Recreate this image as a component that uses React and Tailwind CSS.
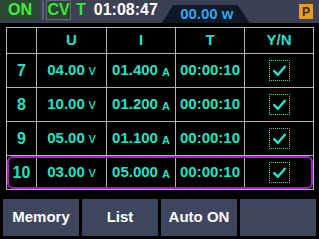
import React from "react";

const rows = [
  { n: "7", u: "04.00", i: "01.400", t: "00:00:10" },
  { n: "8", u: "10.00", i: "01.200", t: "00:00:10" },
  { n: "9", u: "05.00", i: "01.100", t: "00:00:10" },
  { n: "10", u: "03.00", i: "05.000", t: "00:00:10" },
];

function Check() {
  return (
    <div className="w-[21px] h-[21px] border border-dotted border-[#24e2c6] flex items-center justify-center">
      <svg width="17" height="17" viewBox="0 0 16 16">
        <path d="M3 8.5 L6.5 12 L13 4.5" fill="none" stroke="#24e2c6" strokeWidth="2.4" strokeLinecap="round" strokeLinejoin="round" />
      </svg>
    </div>
  );
}

export default function App() {
  const cell = "bg-black flex items-center justify-center text-[#24e2c6] font-bold";
  return (
    <div
      className="w-[319px] h-[239px] bg-black overflow-hidden flex flex-col"
      style={{ fontFamily: '"Liberation Sans", Arial, sans-serif' }}
    >
      {/* status bar */}
      <div className="h-[23px] bg-[#3b4152] flex items-stretch shrink-0">
        <div className="w-[40px] h-[20px] bg-[#2a4a33] flex items-center justify-center text-[#3cf03c] font-bold text-[16px]">
          ON
        </div>
        <div className="w-[2px] h-[20px] bg-[#5c6272] ml-[2px]" />
        <div className="ml-[2px] w-[25px] h-[20px] bg-[#2b4236] border border-[#5d6b6b] flex items-center justify-center text-[#3ce43c] font-bold text-[16px]">
          CV
        </div>
        <div className="ml-[5px] h-[20px] flex items-center text-[#3ce43c] font-bold text-[16px]">T</div>
        <div className="ml-[8px] h-[20px] flex items-center text-white font-bold text-[16px]">01:08:47</div>
        <div className="ml-[4px] mt-[5px] w-[88px] h-[18px] bg-[#0d1828] [clip-path:polygon(13%_0,86%_0,100%_100%,0_100%)] flex items-center justify-center text-[#2fa6ee] text-[15px] font-semibold pl-[2px]">
          00.00 w
        </div>
        <div className="flex-1" />
        <div className="mt-[4px] mr-[6px] w-[14px] h-[15px] bg-[#e99a22] flex items-center justify-center text-[#3a2200] font-bold text-[12px]">
          P
        </div>
      </div>

      {/* table */}
      <div className="mt-[4px] ml-[6px] w-[308px] bg-[#b4b4b4] p-px relative">
        <div className="grid grid-cols-[29px_69px_68px_68px_68px] grid-rows-[25px_33px_33px_33px_33px] gap-px">
          <div className={cell} />
          <div className={cell + " text-[15px]"}>U</div>
          <div className={cell + " text-[15px]"}>I</div>
          <div className={cell + " text-[15px]"}>T</div>
          <div className={cell + " text-[15px]"}>Y/N</div>
          {rows.map((r, idx) => (
            <React.Fragment key={r.n}>
              <div className={cell + " text-[16px]" + (idx === 3 ? " bg-[#1c1c1c]" : "")}>{r.n}</div>
              <div className={cell + " text-[15px]" + (idx === 3 ? " bg-[#1c1c1c]" : "")}>
                {r.u}
                <span className="text-[14px] font-normal ml-[4px]">v</span>
              </div>
              <div className={cell + " text-[15px]" + (idx === 3 ? " bg-[#1c1c1c]" : "")}>
                {r.i}
                <span className="text-[11px] ml-[4px] mt-[3px]">A</span>
              </div>
              <div className={cell + " text-[15px]" + (idx === 3 ? " bg-[#1c1c1c]" : "")}>{r.t}</div>
              <div className={cell + (idx === 3 ? " bg-[#1c1c1c]" : "")}>
                <Check />
              </div>
            </React.Fragment>
          ))}
        </div>
        <div className="absolute left-[1px] right-[1px] bottom-[1px] h-[33px] border-2 border-[#a81fc8] rounded-[6px] pointer-events-none" />
      </div>

      {/* buttons */}
      <div className="mt-[9px] px-[3px] flex gap-[3px]">
        {["Memory", "List", "Auto ON", ""].map((b, i) => (
          <div
            key={i}
            className="h-[37px] flex-1 bg-[#3e465e] flex items-center justify-center text-white font-bold text-[15px]"
          >
            {b}
          </div>
        ))}
      </div>
    </div>
  );
}
